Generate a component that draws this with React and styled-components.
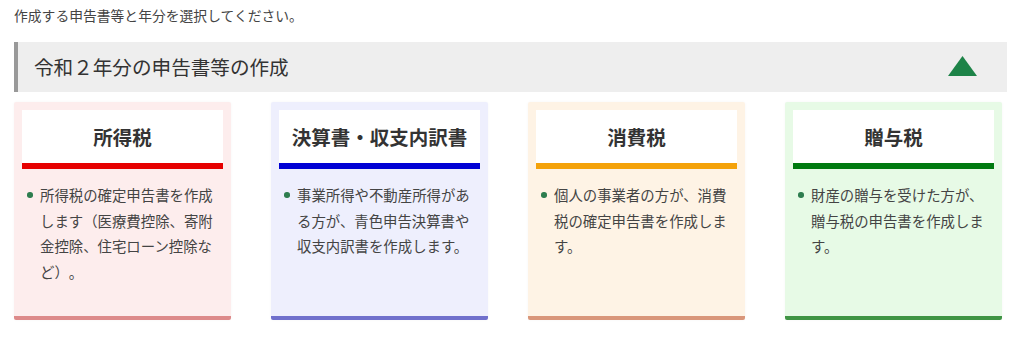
import React from "react";
import styled, { createGlobalStyle } from "styled-components";

const Global = createGlobalStyle`
  html, body { margin: 0; padding: 0; background: #fff; }
  body {
    font-family: "Noto Sans CJK JP", "Noto Sans", sans-serif;
    color: #333;
    text-spacing-trim: space-all;
  }
`;

const Page = styled.div`
  width: 1024px;
  height: 353px;
  box-sizing: border-box;
  padding: 5px 17px 0 14px;
  overflow: hidden;
`;

const Intro = styled.p`
  margin: 0;
  font-size: 13.8px;
  line-height: 20px;
  color: #444;
`;

const SectionBar = styled.div`
  margin-top: 17px;
  height: 50px;
  box-sizing: border-box;
  background: #eeeeee;
  border-left: 4px solid #999;
  display: flex;
  align-items: center;
  justify-content: space-between;
  padding: 0 30px 0 16px;
`;

const SectionTitle = styled.h2`
  margin: 0;
  font-size: 19.6px;
  font-weight: 400;
  color: #333;
  line-height: 1;
`;

const Toggle = styled.button`
  border: 0;
  background: none;
  padding: 0;
  margin-top: -2px;
  display: flex;
  cursor: pointer;
`;

const CardRow = styled.div`
  margin-top: 10px;
  display: grid;
  grid-template-columns: repeat(4, 217px);
  column-gap: 40px;
`;

const Card = styled.div`
  height: 218px;
  box-sizing: border-box;
  background: ${(p) => p.$bg};
  border-bottom: 4px solid ${(p) => p.$bottom};
  border-radius: 2px;
  padding: 8px 8px 0;
  box-shadow: 0 0 3px rgba(0, 0, 0, 0.04);
`;

const CardHead = styled.div`
  height: 59px;
  box-sizing: border-box;
  background: #fff;
  border-bottom: 6px solid ${(p) => p.$accent};
  display: flex;
  align-items: center;
  justify-content: center;
  font-size: 19.5px;
  font-weight: 700;
  color: #333;
`;

const List = styled.ul`
  margin: 13px 0 0;
  padding: 0 0 0 18px;
  list-style: none;
`;

const Item = styled.li`
  position: relative;
  font-size: 14.4px;
  line-height: 25.6px;
  color: #444;
  text-spacing-trim: space-all;
  &::before {
    content: "";
    position: absolute;
    left: -13px;
    top: 10px;
    width: 5.5px;
    height: 5.5px;
    border-radius: 50%;
    background: #2e7d4f;
  }
`;

const cards = [
  {
    title: "所得税",
    bg: "#fdeded",
    accent: "#e60000",
    bottom: "#dd8a8a",
    text: "所得税の確定申告書を作成します（医療費控除、寄附金控除、住宅ローン控除など）。",
  },
  {
    title: "決算書・収支内訳書",
    bg: "#eeeffd",
    accent: "#0000d4",
    bottom: "#7070cc",
    text: "事業所得や不動産所得がある方が、青色申告決算書や収支内訳書を作成します。",
  },
  {
    title: "消費税",
    bg: "#fef3e5",
    accent: "#f4a20a",
    bottom: "#d9967a",
    text: "個人の事業者の方が、消費税の確定申告書を作成します。",
  },
  {
    title: "贈与税",
    bg: "#e7fae6",
    accent: "#007a10",
    bottom: "#3f9444",
    text: "財産の贈与を受けた方が、贈与税の申告書を作成します。",
  },
];

export default function App() {
  return (
    <>
      <Global />
      <Page>
        <Intro>作成する申告書等と年分を選択してください。</Intro>
        <SectionBar>
          <SectionTitle>令和２年分の申告書等の作成</SectionTitle>
          <Toggle aria-label="閉じる">
            <svg width="29" height="20" viewBox="0 0 29 20">
              <polygon points="14.5,0 29,20 0,20" fill="#1d8348" />
            </svg>
          </Toggle>
        </SectionBar>
        <CardRow>
          {cards.map((c) => (
            <Card key={c.title} $bg={c.bg} $bottom={c.bottom}>
              <CardHead $accent={c.accent}>{c.title}</CardHead>
              <List>
                <Item>{c.text}</Item>
              </List>
            </Card>
          ))}
        </CardRow>
      </Page>
    </>
  );
}
